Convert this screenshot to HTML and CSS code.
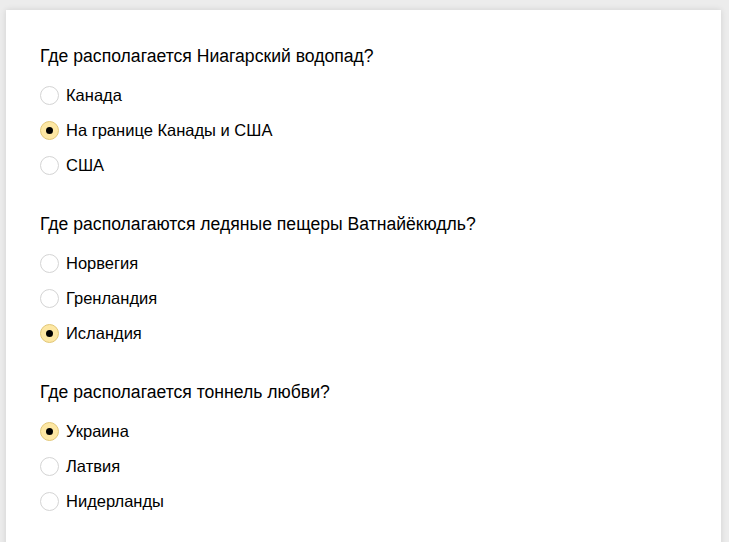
FILE: index.html
```html
<!DOCTYPE html>
<html lang="ru">
<head>
<meta charset="utf-8">
<title>Опрос</title>
<link rel="stylesheet" href="styles.css">
</head>
<body>
<div class="card">
  <div class="group">
    <div class="question">Где располагается Ниагарский водопад?</div>
    <div class="option"><span class="radio"></span><span class="label">Канада</span></div>
    <div class="option"><span class="radio checked"></span><span class="label">На границе Канады и США</span></div>
    <div class="option"><span class="radio"></span><span class="label">США</span></div>
  </div>
  <div class="group">
    <div class="question">Где располагаются ледяные пещеры Ватнайёкюдль?</div>
    <div class="option"><span class="radio"></span><span class="label">Норвегия</span></div>
    <div class="option"><span class="radio"></span><span class="label">Гренландия</span></div>
    <div class="option"><span class="radio checked"></span><span class="label">Исландия</span></div>
  </div>
  <div class="group">
    <div class="question">Где располагается тоннель любви?</div>
    <div class="option"><span class="radio checked"></span><span class="label">Украина</span></div>
    <div class="option"><span class="radio"></span><span class="label">Латвия</span></div>
    <div class="option"><span class="radio"></span><span class="label">Нидерланды</span></div>
  </div>
</div>
</body>
</html>
```
FILE: styles.css
```css
html, body {
  margin: 0;
  padding: 0;
  background: #ececec;
  height: 100%;
  overflow: hidden;
}
body {
  padding: 10px 8px 0 6px;
  box-sizing: border-box;
  font-family: "Liberation Sans", Arial, sans-serif;
  color: #000;
}
.card {
  background: #fff;
  box-shadow: 0 0 6px rgba(0,0,0,0.12);
  padding: 36px 34px 40px 34px;
  min-height: 600px;
}
.group {
  display: flex;
  flex-direction: column;
  margin-bottom: 31px;
}
.question {
  font-size: 17.6px;
  line-height: 20px;
  margin-bottom: 12px;
}
.option {
  display: flex;
  align-items: center;
  height: 35px;
  font-size: 16.5px;
}
.radio {
  width: 17px;
  height: 17px;
  border: 1px solid #d4d4d4;
  border-radius: 50%;
  box-sizing: content-box;
  margin-right: 7px;
  display: flex;
  align-items: center;
  justify-content: center;
  flex: none;
}
.radio.checked {
  background: #fde7a3;
  border-color: #e2c777;
}
.radio.checked::after {
  content: "";
  width: 7px;
  height: 7px;
  border-radius: 50%;
  background: #000;
}
```
